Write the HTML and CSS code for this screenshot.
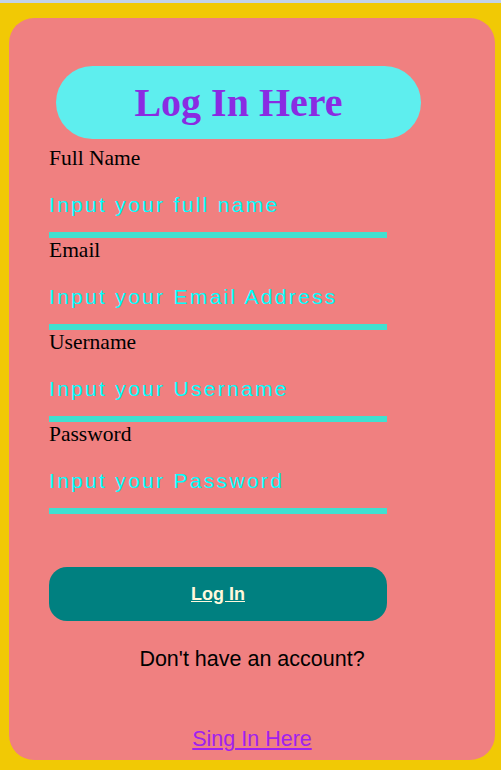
FILE: index.html
```html
<!DOCTYPE html>
<html lang="en">
<head>
<meta charset="utf-8">
<title>Log In</title>
<link rel="stylesheet" href="styles.css">
</head>
<body>
<div class="topbar"></div>
<main class="page">
  <section class="card">
    <h1 class="title">Log In Here</h1>
    <form class="form">
      <label class="label" for="fullname">Full Name</label>
      <input class="field" id="fullname" type="text" placeholder="Input your full name">
      <label class="label" for="email">Email</label>
      <input class="field" id="email" type="text" placeholder="Input your Email Address">
      <label class="label" for="username">Username</label>
      <input class="field" id="username" type="text" placeholder="Input your Username">
      <label class="label" for="password">Password</label>
      <input class="field" id="password" type="password" placeholder="Input your Password">
      <button class="btn" type="button">Log In</button>
    </form>
    <p class="question">Don't have an account?</p>
    <p class="signup"><a class="signup-link" href="#">Sing In Here</a></p>
  </section>
</main>
</body>
</html>
```
FILE: styles.css
```css
html, body {
  margin: 0;
  padding: 0;
}
body {
  background: #f1c905;
  font-family: "Liberation Serif", "Times New Roman", serif;
}
.topbar {
  height: 3px;
  background: #c2d2ea;
}
.page {
  padding: 15px 6px 10px 9px;
}
.card {
  background: #f08080;
  border-radius: 25px;
  padding: 48px 0 8px 40px;
}
.title {
  margin: 0 0 7px 7px;
  width: 365px;
  height: 73px;
  line-height: 73px;
  border-radius: 37px;
  background: #5eeeee;
  color: #8a2be2;
  text-align: center;
  font-family: "Liberation Serif", "Times New Roman", serif;
  font-weight: bold;
  font-size: 40px;
}
.form {
  display: flex;
  flex-direction: column;
  align-items: flex-start;
  width: 338px;
}
.label {
  display: block;
  font-size: 21.5px;
  line-height: 24px;
  color: #000;
}
.field {
  box-sizing: border-box;
  width: 338px;
  height: 68px;
  margin: 0;
  padding: 8px 0 0 0;
  border: none;
  border-bottom: 6px solid #40e0d0;
  background: transparent;
  outline: none;
  font-family: "Liberation Sans", Arial, sans-serif;
  font-size: 21px;
  letter-spacing: 2.3px;
  color: #00ffff;
}
.field::placeholder {
  color: #00ffff;
  opacity: 1;
}
.btn {
  margin-top: 53px;
  width: 338px;
  height: 54px;
  border: none;
  border-radius: 18px;
  background: #008080;
  color: #fff8dc;
  font-family: "Liberation Sans", Arial, sans-serif;
  font-weight: bold;
  font-size: 18px;
  text-decoration: underline;
  cursor: pointer;
}
.question {
  margin: 26px 0 0 -40px;
  text-align: center;
  font-family: "Liberation Sans", Arial, sans-serif;
  font-size: 21.5px;
  line-height: 25px;
  color: #000;
}
.signup {
  margin: 55px 0 0 -40px;
  text-align: center;
  font-family: "Liberation Sans", Arial, sans-serif;
  font-size: 21.5px;
  line-height: 25px;
}
.signup-link {
  color: #a020f0;
  text-decoration: underline;
}
```
